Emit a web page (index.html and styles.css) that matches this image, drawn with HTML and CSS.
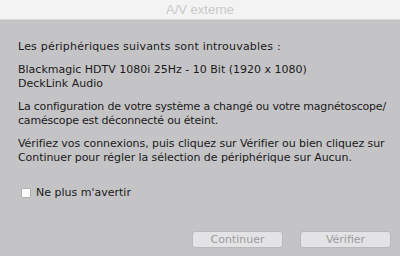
FILE: index.html
```html
<!DOCTYPE html>
<html>
<head>
<meta charset="utf-8">
<link rel="stylesheet" href="styles.css">
</head>
<body>
<div class="window">
  <div class="titlebar">A/V externe</div>
  <div class="content">
    <p class="para wide">Les périphériques suivants sont introuvables :</p>
    <p class="para">Blackmagic HDTV 1080i 25Hz - 10 Bit (1920 x 1080)<br>DeckLink Audio</p>
    <p class="para tight">La configuration de votre système a changé ou votre magnétoscope/<br>caméscope est déconnecté ou éteint.</p>
    <p class="para snug">Vérifiez vos connexions, puis cliquez sur Vérifier ou bien cliquez sur<br>Continuer pour régler la sélection de périphérique sur Aucun.</p>
    <label class="check"><span class="box"></span>Ne plus m'avertir</label>
  </div>
  <div class="buttons">
    <button class="btn" disabled>Continuer</button>
    <button class="btn" disabled>Vérifier</button>
  </div>
</div>
</body>
</html>
```
FILE: styles.css
```css
html, body {
  margin: 0;
  padding: 0;
  width: 400px;
  height: 256px;
  overflow: hidden;
  background: #c4c4c6;
}
.window {
  width: 400px;
  height: 256px;
  display: flex;
  flex-direction: column;
  font-family: "DejaVu Sans", sans-serif;
  font-size: 11px;
  color: #1a1a1a;
}
.titlebar {
  height: 19px;
  line-height: 20px;
  background: #f3f3f3;
  border-bottom: 1px solid #d8d8d8;
  text-align: center;
  color: #c9c9c9;
  font-family: "Liberation Sans", sans-serif;
  font-size: 13px;
}
.content {
  flex: 1;
  padding: 20px 4px 0 18px;
  display: flex;
  flex-direction: column;
}
.para {
  margin: 0 0 9px 0;
  line-height: 14px;
  white-space: nowrap;
}
.wide {
  letter-spacing: 0.2px;
}
.tight {
  letter-spacing: -0.2px;
}
.snug {
  letter-spacing: -0.07px;
}
.check {
  display: flex;
  align-items: center;
  gap: 5px;
  margin-top: 12px;
  padding-left: 3px;
}
.box {
  width: 8px;
  height: 8px;
  background: #fdfdfd;
  border: 1px solid #b0b0b0;
  border-radius: 1px;
}
.buttons {
  display: flex;
  justify-content: flex-end;
  gap: 17px;
  padding: 0 9px 8px 0;
}
.btn {
  width: 91px;
  height: 17px;
  padding: 0;
  background: #e3e3e5;
  border: 1px solid #b9b9bb;
  border-radius: 3px;
  color: #9c9c9c;
  font-family: "DejaVu Sans", sans-serif;
  font-size: 11px;
}
```
